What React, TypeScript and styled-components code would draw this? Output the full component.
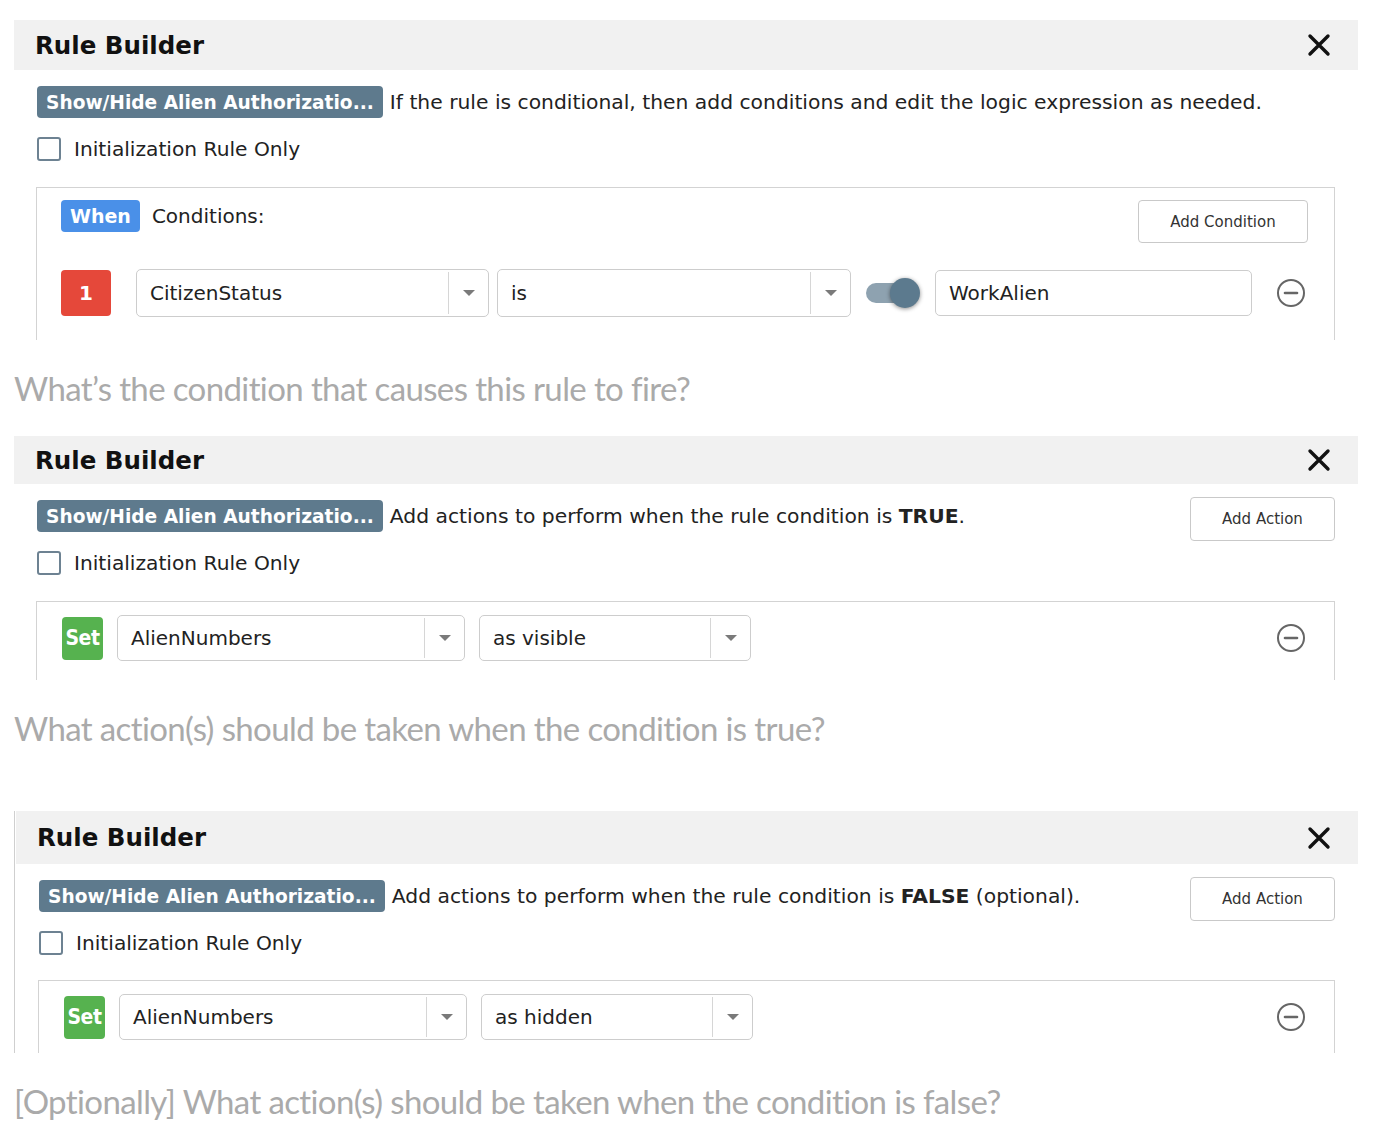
import React from "react";
import styled, { createGlobalStyle } from "styled-components";

const GlobalStyle = createGlobalStyle`
  html, body {
    margin: 0;
    padding: 0;
    background: #fff;
  }
  body {
    font-family: "DejaVu Sans", Verdana, sans-serif;
    color: #222;
  }
  * { box-sizing: border-box; }
`;

const Page = styled.main`
  display: flex;
  flex-direction: column;
  width: 1358px;
  padding: 20px 0 0 14px;
`;

const Panel = styled.section<{ $framed?: boolean }>`
  display: flex;
  flex-direction: column;
  border-left: ${(p) => (p.$framed ? "1px solid #cfcfcf" : "none")};
  padding-left: ${(p) => (p.$framed ? "1px" : "0")};
`;

const Header = styled.header<{ $h: number }>`
  display: flex;
  align-items: center;
  justify-content: space-between;
  height: ${(p) => p.$h}px;
  padding: 0 27px 0 21px;
  background: #f1f1f1;
`;

const Title = styled.h2`
  margin: 0;
  font-size: 24.5px;
  font-weight: bold;
  color: #111;
`;

const Body = styled.div`
  display: flex;
  flex-direction: column;
  padding: 16px 23px 0 23px;
`;

const IntroRow = styled.div`
  display: flex;
  align-items: center;
  height: 32px;
  gap: 7px;
`;

const RuleTag = styled.span`
  display: inline-flex;
  align-items: center;
  height: 32px;
  padding: 0 9px;
  border-radius: 4px;
  background: #5e7a8d;
  color: #fff;
  font-weight: bold;
  font-size: 18.6px;
  white-space: nowrap;
`;

const Hint = styled.p`
  flex: 1;
  margin: 0;
  font-size: 20.3px;
  white-space: nowrap;

  b {
    font-weight: bold;
  }
`;

const GhostButton = styled.button<{ $w: number; $h: number }>`
  flex: none;
  width: ${(p) => p.$w}px;
  height: ${(p) => p.$h}px;
  background: #fff;
  border: 1px solid #c9c9c9;
  border-radius: 4px;
  font-family: "DejaVu Sans", Verdana, sans-serif;
  font-size: 15px;
  color: #333;
  padding: 0;
`;

const IntroButton = styled(GhostButton)`
  margin-top: 6px;
`;

const CheckRow = styled.label`
  display: flex;
  align-items: center;
  gap: 13px;
  height: 24px;
  margin-top: 19px;
  font-size: 20.2px;
`;

const CheckBox = styled.span`
  width: 24px;
  height: 24px;
  border: 2px solid #6d8292;
  border-radius: 3px;
  background: #fff;
`;

const Box = styled.div<{ $top: number; $pad: string }>`
  display: flex;
  flex-direction: column;
  margin: ${(p) => p.$top}px 0 0 -1px;
  border: 1px solid #d3d3d3;
  border-bottom: none;
  padding: ${(p) => p.$pad};
`;

const CondHead = styled.div`
  display: flex;
  align-items: flex-start;
  justify-content: space-between;
`;

const CondLabel = styled.div`
  display: flex;
  align-items: center;
  gap: 12px;
  height: 32px;
  font-size: 20px;
`;

const WhenTag = styled.span`
  display: inline-flex;
  align-items: center;
  height: 32px;
  padding: 0 9px;
  border-radius: 4px;
  background: #4a90e8;
  color: #fff;
  font-weight: bold;
  font-size: 19px;
`;

const Row = styled.div<{ $top: number }>`
  display: flex;
  align-items: center;
  margin-top: ${(p) => p.$top}px;
`;

const IndexTag = styled.span`
  display: flex;
  align-items: center;
  justify-content: center;
  width: 50px;
  height: 46px;
  border-radius: 4px;
  background: #e5483a;
  color: #fff;
  font-weight: bold;
  font-size: 20px;
`;

const SetTag = styled.span`
  display: flex;
  align-items: center;
  justify-content: center;
  width: 41px;
  height: 43px;
  border-radius: 4px;
  background: #56b24f;
  color: #fff;
  font-family: "DejaVu Sans Condensed", "DejaVu Sans", sans-serif;
  font-weight: bold;
  font-size: 21px;
  letter-spacing: -0.5px;
`;

const SelectBox = styled.div<{ $w: number; $h: number; $ml: number }>`
  display: flex;
  align-items: stretch;
  width: ${(p) => p.$w}px;
  height: ${(p) => p.$h}px;
  margin-left: ${(p) => p.$ml}px;
  border: 1px solid #cdcdcd;
  border-radius: 5px;
  background: #fff;
`;

const SelectValue = styled.span`
  flex: 1;
  display: flex;
  align-items: center;
  padding-left: 13px;
  font-size: 20px;
`;

const SelectCaret = styled.span`
  width: 40px;
  margin: 2px 0;
  border-left: 1px solid #d6d6d6;
  display: flex;
  align-items: center;
  justify-content: center;

  &::after {
    content: "";
    border-left: 6px solid transparent;
    border-right: 6px solid transparent;
    border-top: 6px solid #7a7a7a;
  }
`;

const Toggle = styled.span`
  position: relative;
  flex: none;
  width: 54px;
  height: 30px;
  margin-left: 15px;

  &::before {
    content: "";
    position: absolute;
    left: 0;
    top: 5px;
    width: 50px;
    height: 20px;
    border-radius: 10px;
    background: #8ea2b0;
  }

  &::after {
    content: "";
    position: absolute;
    right: 0;
    top: 0;
    width: 30px;
    height: 30px;
    border-radius: 50%;
    background: #5c7a8e;
    box-shadow: 0 1px 4px rgba(0, 0, 0, 0.45);
  }
`;

const ValueInput = styled.div`
  display: flex;
  align-items: center;
  width: 317px;
  height: 46px;
  margin-left: 15px;
  padding-left: 13px;
  border: 1px solid #cdcdcd;
  border-radius: 5px;
  font-size: 20px;
`;

const RemoveIcon = styled.svg`
  flex: none;
  margin-left: auto;
  margin-right: 2px;
`;

const Caption = styled.p<{ $after: number }>`
  margin: 28px 0 ${(p) => p.$after}px;
  font-family: Lato, "Open Sans", sans-serif;
  font-size: 33px;
  line-height: 40px;
  color: #aaaaaa;
  letter-spacing: -0.62px;
  white-space: nowrap;
`;

const CloseIcon = () => (
  <svg width="24" height="24" viewBox="0 0 24 24">
    <path d="M3 3 L21 21 M21 3 L3 21" stroke="#111" strokeWidth="3.4" strokeLinecap="round" />
  </svg>
);

const Remove = () => (
  <RemoveIcon width="30" height="30" viewBox="0 0 30 30">
    <circle cx="15" cy="15" r="13" fill="none" stroke="#666" strokeWidth="2" />
    <path d="M9 15 H21" stroke="#666" strokeWidth="2.6" strokeLinecap="round" />
  </RemoveIcon>
);

const Select = ({ value, w, h, ml }: { value: string; w: number; h: number; ml: number }) => (
  <SelectBox $w={w} $h={h} $ml={ml}>
    <SelectValue>{value}</SelectValue>
    <SelectCaret />
  </SelectBox>
);

const RuleHead = ({
  h,
  hint,
  button,
}: {
  h: number;
  hint: React.ReactNode;
  button?: boolean;
}) => (
  <>
    <Header $h={h}>
      <Title>Rule Builder</Title>
      <CloseIcon />
    </Header>
    <Body>
      <IntroRow>
        <RuleTag>Show/Hide Alien Authorizatio...</RuleTag>
        <Hint>{hint}</Hint>
        {button && (
          <IntroButton $w={145} $h={44}>
            Add Action
          </IntroButton>
        )}
      </IntroRow>
      <CheckRow>
        <CheckBox />
        Initialization Rule Only
      </CheckRow>
    </Body>
  </>
);

const ActionBox = ({ value, top, bottom }: { value: string; top: number; bottom: number }) => (
  <Box $top={top} $pad={`13px 26px ${bottom}px 25px`}>
    <Row $top={0}>
      <SetTag>Set</SetTag>
      <Select value="AlienNumbers" w={348} h={46} ml={14} />
      <Select value={value} w={272} h={46} ml={14} />
      <Remove />
    </Row>
  </Box>
);

const BoxWrap = styled.div`
  padding: 0 23px;
`;

export default function App() {
  return (
    <Page>
      <GlobalStyle />
      <Panel>
        <RuleHead
          h={50}
          hint="If the rule is conditional, then add conditions and edit the logic expression as needed."
        />
        <BoxWrap>
          <Box $top={26} $pad="12px 26px 23px 24px">
            <CondHead>
              <CondLabel>
                <WhenTag>When</WhenTag>
                Conditions:
              </CondLabel>
              <GhostButton $w={170} $h={43}>
                Add Condition
              </GhostButton>
            </CondHead>
            <Row $top={26}>
              <IndexTag>1</IndexTag>
              <Select value="CitizenStatus" w={353} h={48} ml={25} />
              <Select value="is" w={354} h={48} ml={8} />
              <Toggle />
              <ValueInput>WorkAlien</ValueInput>
              <Remove />
            </Row>
          </Box>
        </BoxWrap>
      </Panel>
      <Caption $after={28}>What’s the condition that causes this rule to fire?</Caption>

      <Panel>
        <RuleHead
          h={48}
          button
          hint={
            <>
              Add actions to perform when the rule condition is <b>TRUE</b>.
            </>
          }
        />
        <BoxWrap>
          <ActionBox value="as visible" top={26} bottom={19} />
        </BoxWrap>
      </Panel>
      <Caption $after={63}>What action(s) should be taken when the condition is true?</Caption>

      <Panel $framed>
        <RuleHead
          h={53}
          button
          hint={
            <>
              Add actions to perform when the rule condition is <b>FALSE</b> (optional).
            </>
          }
        />
        <BoxWrap>
          <ActionBox value="as hidden" top={25} bottom={13} />
        </BoxWrap>
      </Panel>
      <Caption $after={20}>
        [Optionally] What action(s) should be taken when the condition is false?
      </Caption>
    </Page>
  );
}
